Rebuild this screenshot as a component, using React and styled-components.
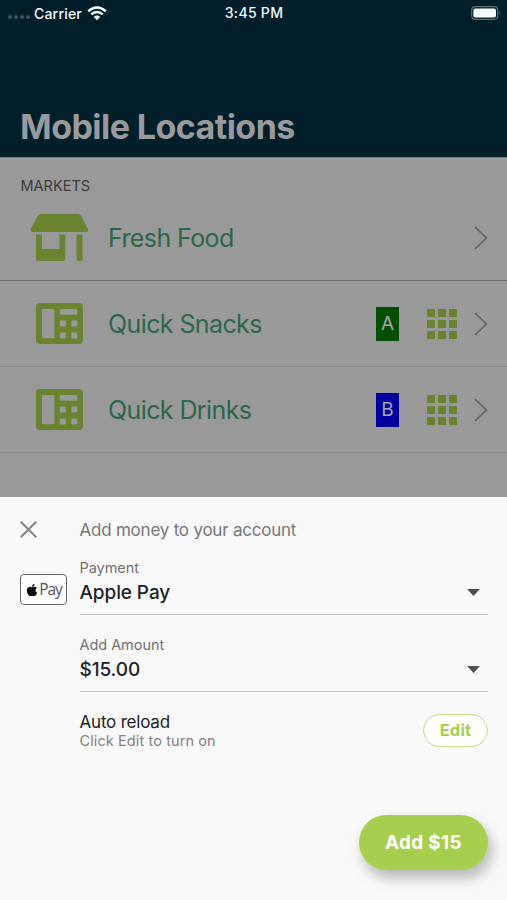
import React from "react";
import styled, { createGlobalStyle } from "styled-components";
import { FaApple } from "react-icons/fa";

const GlobalStyle = createGlobalStyle`
  * {
    box-sizing: border-box;
  }
  body {
    margin: 0;
    background-color: #999999;
    font-family: Inter, "Liberation Sans", sans-serif;
  }
`;

const Screen = styled.div`
  width: 507px;
  height: 900px;
  display: flex;
  flex-direction: column;
  overflow: hidden;
  background-color: #999999;
`;

const Header = styled.header`
  height: 158px;
  display: flex;
  flex-direction: column;
  justify-content: space-between;
  background-color: #001f2a;
  border-bottom: 1px solid #6f7d86;
`;

const StatusBar = styled.div`
  height: 26px;
  padding: 0 6px 0 8px;
  display: grid;
  grid-template-columns: 1fr auto 1fr;
  align-items: center;
  color: #f4f8fa;
  font-size: 14px;
  font-weight: 500;
`;

const Carrier = styled.div`
  display: flex;
  align-items: center;
  letter-spacing: 0.2px;
`;

const Dots = styled.div`
  display: flex;
  gap: 2px;
  margin: 8px 4px 0 0;
`;

const Dot = styled.span`
  width: 4px;
  height: 4px;
  border-radius: 50%;
  background-color: #3d525b;
`;

const Time = styled.div`
  letter-spacing: 0.3px;
  margin: -1px 1px 0 0;
`;

const StatusRight = styled.div`
  display: flex;
  justify-content: flex-end;
`;

const Title = styled.h1`
  margin: 0 0 9px 20px;
  color: #999a9d;
  font-size: 34px;
  line-height: 42px;
  font-weight: 700;
  letter-spacing: -0.55px;
`;

const SectionTitle = styled.h2`
  margin: 0;
  padding: 19px 0 0 20.5px;
  height: 37px;
  color: #3c3c3c;
  font-size: 14.5px;
  line-height: 18px;
  font-weight: 400;
`;

const Row = styled.div`
  height: 86px;
  padding: 0 19px 0 30px;
  display: flex;
  align-items: center;
  border-bottom: 1px solid ${props => (props.$strong ? "#6c6c6c" : "#8a8a8a")};
`;

const RowIcon = styled.div`
  width: 78px;
  display: flex;
`;

const RowName = styled.div`
  flex: 1;
  color: #2a674b;
  font-size: 25px;
  line-height: 30px;
  letter-spacing: -0.6px;
`;

const Badge = styled.div`
  width: 23px;
  height: 34px;
  margin-right: 28px;
  background-color: ${props => props.color};
  color: #a6a6a6;
  font-size: 19px;
  line-height: 34px;
  text-align: center;
`;

const GridIcon = styled.div`
  display: grid;
  grid-template-columns: repeat(3, 8px);
  gap: 3px;
  margin-right: 17px;
`;

const Cell = styled.span`
  height: 8px;
  background-color: #69842f;
`;

const Sheet = styled.section`
  height: 403px;
  margin-top: auto;
  padding: 0 19px 30px 20px;
  display: flex;
  flex-direction: column;
  background-color: #f9f9f9;
`;

const SheetHeader = styled.div`
  height: 60px;
  padding-top: 5px;
  display: flex;
  align-items: center;
`;

const Side = styled.div`
  width: 59.5px;
  flex: none;
  display: flex;
`;

const SheetTitle = styled.div`
  color: #777777;
  font-size: 17px;
  letter-spacing: -0.22px;
`;

const Field = styled.div`
  height: 77px;
  display: flex;
`;

const PayCard = styled.div`
  width: 47px;
  height: 31px;
  margin-top: 17px;
  display: flex;
  align-items: center;
  justify-content: center;
  border: 1px solid #666666;
  border-radius: 4px;
  background-color: #fefefe;
  color: #555555;
  font-family: "Open Sans", "Noto Sans", sans-serif;
  font-size: 15.5px;
  line-height: 20px;
  letter-spacing: -1px;
`;

const PayText = styled.span`
  margin-top: -2px;
`;

const Select = styled.div`
  flex: 1;
  height: 58px;
  padding-right: 8px;
  display: grid;
  grid-template-columns: 1fr auto;
  grid-template-rows: 21px 28px;
  align-items: center;
  border-bottom: 1px solid #c0c0c0;
`;

const Label = styled.div`
  grid-column: 1 / 3;
  color: #717171;
  font-size: 14.5px;
  letter-spacing: -0.05px;
`;

const Value = styled.div`
  color: #222222;
  font-size: 19px;
  font-weight: 500;
  letter-spacing: -0.1px;
`;

const Reload = styled.div`
  display: flex;
  align-items: center;
  justify-content: space-between;
  height: 40px;
  margin: -1px 0 0 59.5px;
`;

const ReloadText = styled.div`
  padding-top: 2px;
`;

const ReloadTitle = styled.div`
  color: #222222;
  font-size: 17px;
  line-height: 20px;
  letter-spacing: -0.2px;
`;

const ReloadHint = styled.div`
  color: #818181;
  font-size: 14.5px;
  line-height: 18px;
  letter-spacing: 0.1px;
`;

const EditButton = styled.button`
  width: 65px;
  height: 33px;
  padding: 0;
  border: 1px solid #c1dc80;
  border-radius: 17px;
  background-color: #ffffff;
  color: #a4cf4c;
  font-family: inherit;
  font-size: 16.5px;
  font-weight: 700;
  letter-spacing: 0.2px;
`;

const AddButton = styled.button`
  align-self: flex-end;
  width: 129px;
  height: 55px;
  margin-top: auto;
  padding: 0;
  border: none;
  border-radius: 28px;
  background-color: #a5cf4c;
  color: #ffffff;
  font-family: inherit;
  font-size: 19px;
  font-weight: 700;
  letter-spacing: 0.3px;
  box-shadow: 4px 8px 14px rgba(0, 0, 0, 0.27);
`;

const WifiIcon = styled.svg`
  margin-left: 5px;
`;

const Wifi = () => (
  <WifiIcon width="20" height="15" viewBox="0 0 20 15">
    <g fill="none" stroke="#f8ffff" strokeWidth="2.5">
      <path d="M1.2 5.2Q10-2.2 18.8 5.2" />
      <path d="M4.3 8.4Q10 3.7 15.7 8.4" />
    </g>
    <path d="M6.8 10.9Q10 8.3 13.2 10.9L10 14.2Z" fill="#f8ffff" />
  </WifiIcon>
);

const Battery = () => (
  <svg width="30" height="14" viewBox="0 0 30 14">
    <rect x="0.7" y="0.7" width="26" height="12.6" rx="3.5" fill="none" stroke="#5d6d74" strokeWidth="1.2" />
    <rect x="2.4" y="2.4" width="22.6" height="9.2" rx="2" fill="#f8ffff" />
    <path d="M28 5q1.7 2 0 4z" fill="#6d7d84" />
  </svg>
);

const Store = () => (
  <svg width="58" height="48" viewBox="0 0 58 48" fill="#69842f">
    <path d="M11 0H48Q50 0 51.2 1.8L57.6 14.5Q59 18 56 18H3Q-.4 18 .8 14.5L8 1.8Q9.2 0 11 0Z" />
    <path d="M6 20.5H12V35H29.5V20.5H35.3V44.5Q35.3 47 33 47H8.3Q6 47 6 44.5Z" />
    <path d="M46.5 20.5H52.5V45.5Q52.5 47 51 47H48Q46.5 47 46.5 45.5Z" />
  </svg>
);

const MachineIcon = styled.svg`
  margin-left: 6px;
`;

const Machine = () => (
  <MachineIcon width="47" height="41" viewBox="0 0 47 41">
    <rect width="47" height="41" rx="4" fill="#69842f" />
    <g fill="#999999">
      <rect x="6" y="6" width="12.3" height="29.3" rx="1" />
      <rect x="23.8" y="6" width="17.5" height="5.8" rx="1" />
      <rect x="23.8" y="17.6" width="6" height="6" rx="1.2" />
      <rect x="35.3" y="17.6" width="6" height="6" rx="1.2" />
      <rect x="23.8" y="29.4" width="6" height="6" rx="1.2" />
      <rect x="35.3" y="29.4" width="6" height="6" rx="1.2" />
    </g>
  </MachineIcon>
);

const Chevron = () => (
  <svg width="14" height="24" viewBox="0 0 14 24" fill="none" stroke="#626262" strokeWidth="1.6">
    <path d="M1 1L12.3 12L1 23" />
  </svg>
);

const Close = () => (
  <svg width="17" height="17" viewBox="0 0 17 17" stroke="#858585" strokeWidth="2.1">
    <path d="M.7.7L16.3 16.3M16.3.7L.7 16.3" />
  </svg>
);

const Caret = () => (
  <svg width="13" height="7" viewBox="0 0 13 7">
    <path d="M0 0H13L6.5 7Z" fill="#4f4f4f" />
  </svg>
);

const machines = [
  { name: "Quick Snacks", tag: "A", color: "#005000" },
  { name: "Quick Drinks", tag: "B", color: "#0000a0" }
];

export default () => (
  <Screen>
    <GlobalStyle />
    <Header>
      <StatusBar>
        <Carrier>
          <Dots>
            {[0, 1, 2, 3].map(i => (
              <Dot key={i} />
            ))}
          </Dots>
          Carrier
          <Wifi />
        </Carrier>
        <Time>3:45 PM</Time>
        <StatusRight>
          <Battery />
        </StatusRight>
      </StatusBar>
      <Title>Mobile Locations</Title>
    </Header>
    <SectionTitle>MARKETS</SectionTitle>
    <Row $strong>
      <RowIcon>
        <Store />
      </RowIcon>
      <RowName>Fresh Food</RowName>
      <Chevron />
    </Row>
    {machines.map(machine => (
      <Row key={machine.tag}>
        <RowIcon>
          <Machine />
        </RowIcon>
        <RowName>{machine.name}</RowName>
        <Badge color={machine.color}>{machine.tag}</Badge>
        <GridIcon>
          {Array.from({ length: 9 }, (_, i) => (
            <Cell key={i} />
          ))}
        </GridIcon>
        <Chevron />
      </Row>
    ))}
    <Sheet>
      <SheetHeader>
        <Side>
          <Close />
        </Side>
        <SheetTitle>Add money to your account</SheetTitle>
      </SheetHeader>
      <Field>
        <Side>
          <PayCard>
            <FaApple size={14} color="#000000" />
            <PayText>Pay</PayText>
          </PayCard>
        </Side>
        <Select>
          <Label>Payment</Label>
          <Value>Apple Pay</Value>
          <Caret />
        </Select>
      </Field>
      <Field>
        <Side />
        <Select>
          <Label>Add Amount</Label>
          <Value>$15.00</Value>
          <Caret />
        </Select>
      </Field>
      <Reload>
        <ReloadText>
          <ReloadTitle>Auto reload</ReloadTitle>
          <ReloadHint>Click Edit to turn on</ReloadHint>
        </ReloadText>
        <EditButton>Edit</EditButton>
      </Reload>
      <AddButton>Add $15</AddButton>
    </Sheet>
  </Screen>
);
